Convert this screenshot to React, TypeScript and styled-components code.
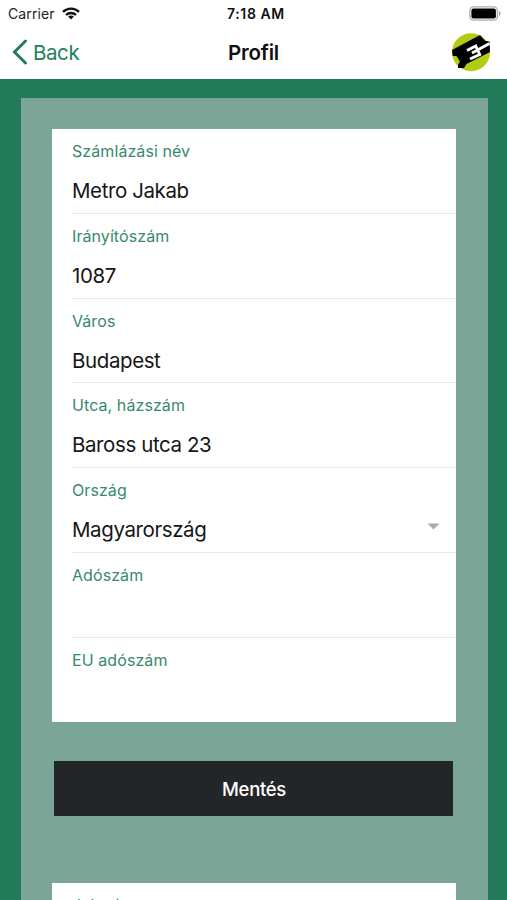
import React from "react";
import styled, { createGlobalStyle } from "styled-components";

const GlobalStyle = createGlobalStyle`
  * { box-sizing: border-box; }
  html, body { margin: 0; padding: 0; height: 900px; overflow: hidden; }
  body { font-family: Inter, "Liberation Sans", sans-serif; background: #227a5b; }
`;

const Screen = styled.div`
  width: 507px;
  height: 900px;
  overflow: hidden;
  display: flex;
  flex-direction: column;
  background: #227a5b;
`;

const Header = styled.header`
  flex: none;
  height: 79px;
  background: #fff;
`;

const Bar = styled.div<{ $height: number }>`
  display: grid;
  grid-template-columns: 1fr auto 1fr;
  align-items: center;
  height: ${(p) => p.$height}px;
`;

const Side = styled.div<{ $pad: number; $end?: boolean }>`
  display: flex;
  align-items: center;
  justify-content: ${(p) => (p.$end ? "flex-end" : "flex-start")};
  padding: 0 ${(p) => p.$pad}px;
`;

const Carrier = styled.span`
  font-size: 14px;
  letter-spacing: 0.1px;
  color: #222;
  margin-right: 7px;
`;

const Clock = styled.span`
  font-size: 14px;
  font-weight: 600;
  letter-spacing: 0.6px;
  color: #111;
  padding-left: 5px;
`;

const BackButton = styled.button`
  display: flex;
  align-items: center;
  gap: 5px;
  padding: 0;
  border: 0;
  background: none;
  font: 400 20.5px Inter, sans-serif;
  letter-spacing: -0.4px;
  color: #227f5e;
`;

const Title = styled.h1`
  margin: 0;
  font-size: 20.5px;
  font-weight: 600;
  letter-spacing: -0.2px;
  color: #111;
`;

const Panel = styled.main`
  flex: none;
  height: 850px;
  margin: 19px 19px 0 20.5px;
  padding: 31px 32px 0 31.5px;
  background: #7ba697;
`;

const Card = styled.section`
  height: 593px;
  padding-left: 20px;
  background: #fff;
  overflow: hidden;
`;

const Field = styled.div<{ $last?: boolean }>`
  display: grid;
  grid-template-columns: 1fr auto;
  grid-template-rows: 37px 46px;
  height: 84.75px;
  padding-top: 4px;
  border-bottom: 1px solid ${(p) => (p.$last ? "transparent" : "#e9ebea")};
`;

const Label = styled.label`
  grid-column: 1 / -1;
  line-height: 37px;
  font-size: 16px;
  letter-spacing: 0.08px;
  color: #37896b;
`;

const Value = styled.span`
  line-height: 41px;
  font-size: 20.5px;
  letter-spacing: -0.4px;
  color: #161616;
`;

const Caret = styled.svg`
  margin: 14px 16px 0 0;
`;

const SaveButton = styled.button`
  display: block;
  width: 399px;
  height: 55px;
  margin: 39px 0 67px 2px;
  padding: 0 0 0 1px;
  border: 0;
  background: #232629;
  color: #fff;
  font: 500 18.5px Inter, sans-serif;
  letter-spacing: -0.3px;
`;

type FieldData = { label: string; value?: string; select?: boolean };

const billing: FieldData[] = [
  { label: "Számlázási név", value: "Metro Jakab" },
  { label: "Irányítószám", value: "1087" },
  { label: "Város", value: "Budapest" },
  { label: "Utca, házszám", value: "Baross utca 23" },
  { label: "Ország", value: "Magyarország", select: true },
  { label: "Adószám" },
  { label: "EU adószám" },
];

const WifiIcon = () => (
  <svg width="18" height="13" viewBox="0 0 18 13" fill="none" stroke="#111" strokeWidth="2.3">
    <path d="M1 4.9C5.4.6 12.6.6 17 4.9" />
    <path d="M4 8C6.8 5.3 11.2 5.3 14 8" />
    <path d="M9 12.5 6.1 9.6c1.6-1.5 4.2-1.5 5.8 0z" fill="#111" stroke="none" />
  </svg>
);

const BatteryIcon = () => (
  <svg width="33" height="15" viewBox="0 0 33 15">
    <rect x="0.9" y="0.9" width="27.5" height="13.2" rx="3.6" fill="#fff" stroke="#aaa" strokeWidth="1.3" />
    <rect x="2.4" y="2.4" width="24.5" height="10.2" rx="2" fill="#000" />
    <path d="M30 5.2c2 .6 2 4 0 4.6z" fill="#999" />
  </svg>
);

const Logo = () => (
  <svg width="40" height="40" viewBox="0 0 40 40">
    <circle cx="20" cy="20.3" r="19" fill="#b5ca12" />
    <path
      d="M1 18 29 3 34 8.700 38.500 9.500 39 20 15.500 32 13 36H7V33L9 29.700 5.500 24H1.700z"
      fill="#000"
    />
    <path
      d="M16 18.500 24.700 14 28.700 22.500 19 27M21 21 38.500 11.500"
      fill="none"
      stroke="#fff"
      strokeWidth="2.900"
    />
  </svg>
);

export default function App() {
  return (
    <>
      <GlobalStyle />
      <Screen>
        <Header>
          <Bar $height={27}>
            <Side $pad={8}>
              <Carrier>Carrier</Carrier>
              <WifiIcon />
            </Side>
            <Clock>7:18 AM</Clock>
            <Side $pad={5} $end>
              <BatteryIcon />
            </Side>
          </Bar>
          <Bar $height={50}>
            <Side $pad={12}>
              <BackButton>
                <svg width="16" height="26" viewBox="0 0 16 26" fill="none" stroke="#227f5e" strokeWidth="3" strokeLinecap="round">
                  <path d="M13.500 2 2.500 13l11 11" />
                </svg>
                Back
              </BackButton>
            </Side>
            <Title>Profil</Title>
            <Side $pad={16} $end>
              <Logo />
            </Side>
          </Bar>
        </Header>
        <Panel>
          <Card>
            {billing.map((f, i) => (
              <Field key={f.label} $last={i === billing.length - 1}>
                <Label>{f.label}</Label>
                <Value>{f.value}</Value>
                {f.select && (
                  <Caret width="13" height="7" viewBox="0 0 13 7">
                    <path d="M0.500 0.500h12l-6 6z" fill="#aaa" />
                  </Caret>
                )}
              </Field>
            ))}
          </Card>
          <SaveButton>Mentés</SaveButton>
          <Card>
            <Field>
              <Label>Jelszó</Label>
            </Field>
          </Card>
        </Panel>
      </Screen>
    </>
  );
}
